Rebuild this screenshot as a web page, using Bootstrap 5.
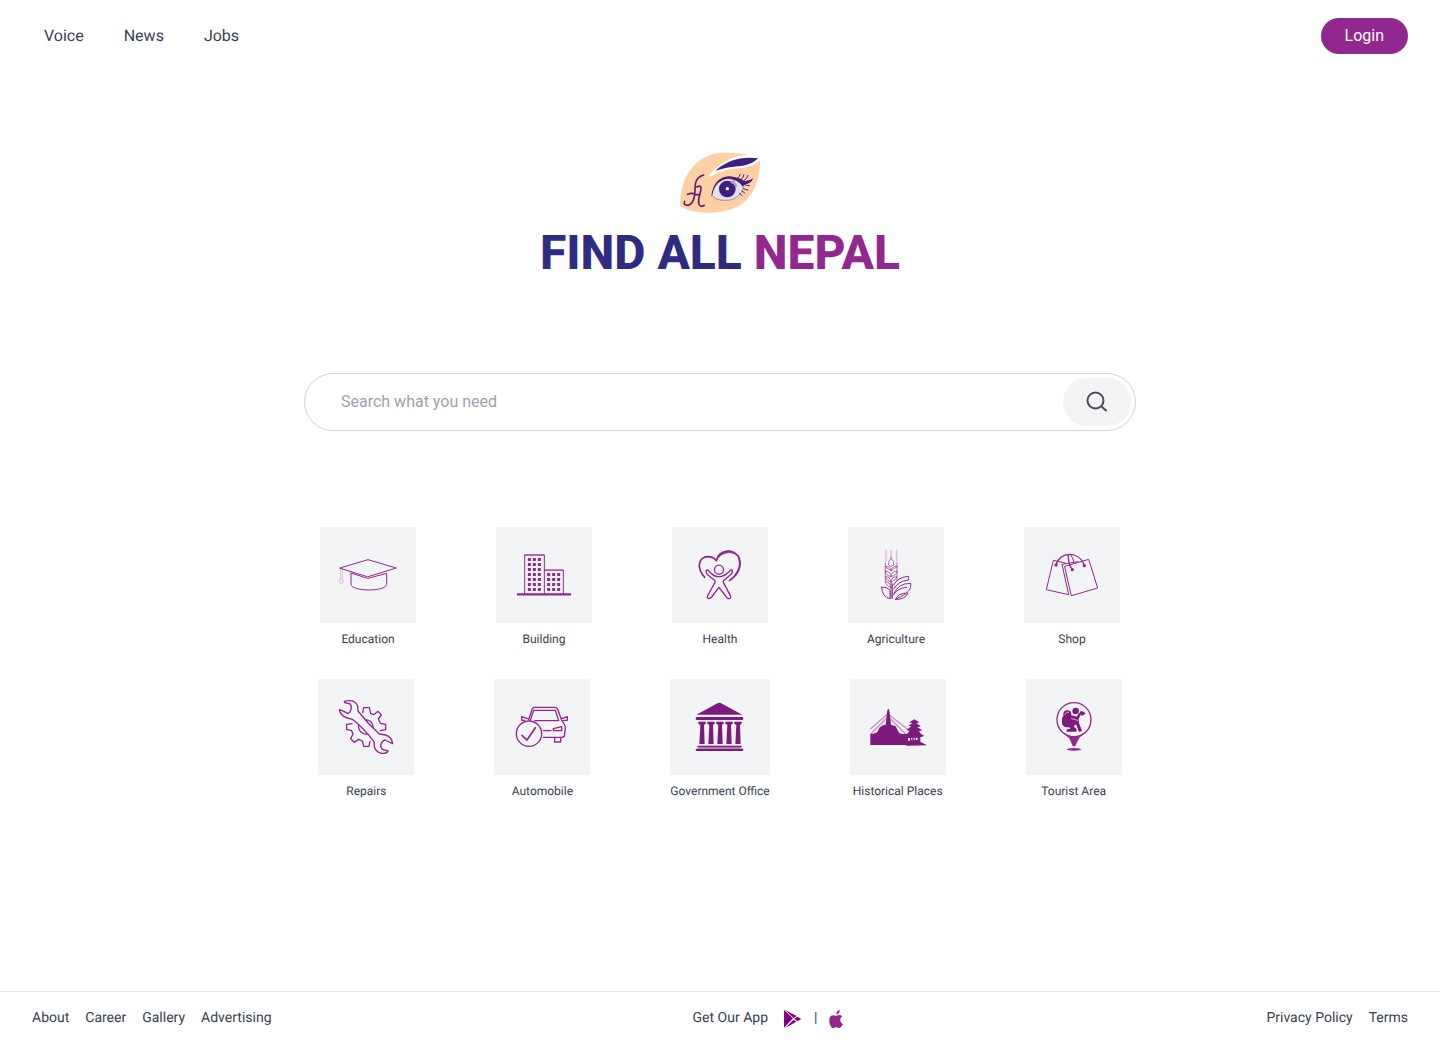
<!DOCTYPE html>
<html lang="en">
<head>
<meta charset="utf-8">
<meta name="viewport" content="width=device-width, initial-scale=1">
<title>Find All Nepal</title>
<link rel="stylesheet" href="https://cdn.jsdelivr.net/npm/bootstrap@5.3.0/dist/css/bootstrap.min.css">
<style>
:root{--brand:#92278f;--brand-dark:#7d1a7d;--navy:#2f2b80;--ink:#374151}
body{font-family:Roboto,"Liberation Sans",sans-serif;color:var(--ink);background:#fff;text-rendering:geometricPrecision}
a{color:inherit;text-decoration:none}
a:hover{color:var(--brand)}
svg{display:block}
.topbar{height:72px;padding:0 32px}
.topbar .navlinks{gap:40px;padding-left:12px}
.btn-login{--bs-btn-color:#fff;--bs-btn-bg:var(--brand);--bs-btn-hover-color:#fff;--bs-btn-hover-bg:#7a1f78;--bs-btn-border-width:0;padding:6px 24px;line-height:24px}
.brand{padding-top:80px}
.brand h1{font-size:48px;line-height:48px;font-weight:800;color:var(--navy);margin-top:16px}
.brand h1 span{color:var(--brand)}
.searchbox{width:100%;max-width:832px;height:58px;margin-top:96px;padding:4px;border:1px solid #d1d5db;border-radius:29px}
.searchbox input{border:0;background:none;padding:0 0 0 32px;color:var(--ink)}
.searchbox input:focus{box-shadow:none}
.searchbox input::placeholder{color:#9ca3af}
.searchbox button{width:68px;background:#f3f4f6;border:0;border-radius:24px}
.cats{margin-top:96px;gap:32px}
.cat-row{gap:32px 80px}
.cat{font-size:12px;line-height:16px;gap:8px}
.tile{min-width:96px;height:96px;background:#f3f4f6}
.tile svg{width:96px;height:96px;fill:none;stroke:var(--brand);stroke-width:3;stroke-linejoin:round;stroke-linecap:round}
.tile .solid{fill:var(--brand-dark);stroke:none}
.foot{border-top:1px solid #e5e7eb;padding:16px 32px;font-size:14px;line-height:21px}
</style>
</head>
<body class="d-flex flex-column min-vh-100">
<header class="topbar d-flex align-items-center justify-content-between">
  <nav class="navlinks d-flex" aria-label="Main"><a href="#">Voice</a><a href="#">News</a><a href="#">Jobs</a></nav>
  <button type="button" class="btn btn-login rounded-pill">Login</button>
</header>

<main class="flex-grow-1 d-flex flex-column align-items-center">
  <div class="brand d-flex flex-column align-items-center">
    <svg width="80" height="61" viewBox="30 21 240 183" aria-hidden="true">
      <path fill="#ffd0a4" d="M30 184C30 88 84 23 162 23Q205 22 236 30Q172 34 113 97Q166 68 216 68Q249 63 270 47C271 110 245 178 177 195C125 209 70 206 30 184Z"/>
      <path fill="#fff" d="M113 97Q166 28 240 30Q262 32 270 46Q250 63 216 69Q166 68 113 97Z"/>
      <path fill="#3b2080" d="M136 77C173 43 220 33 265 40C251 53 229 64 203 64Q169 66 136 77Z"/>
      <path fill="#e2e3e8" d="M127 151C132 119 151 103 178 103Q207 106 224 126C216 151 192 169 164 166Q137 164 127 151Z"/>
      <path fill="none" stroke="#8d5b8e" stroke-width="2" d="M127 151Q138 167 164 166C192 168 213 151 221 128"/>
      <path fill="#4a1b75" d="M124 155C127 116 149 94 180 94Q208 97 223 108Q236 109 250 100Q243 117 225 118L218 125Q205 104 178 101C149 101 132 121 127 151Z"/>
      <g fill="none" stroke="#3b2080" stroke-width="3" stroke-linecap="round"><path d="M200 102Q209 95 211 88M211 106Q221 98 222 89M220 109Q232 101 234 91M221 118Q231 122 238 122M219 129Q226 135 233 135M216 138L224 144M209 145L216 152"/></g>
      <circle cx="172" cy="132" r="25" fill="#3b2080"/>
      <path fill="#aaa1cb" d="M180 113L190 104 202 122 197 129Q194 116 180 113Z"/>
      <circle cx="172" cy="131" r="5" fill="#fff"/>
      <g fill="none" stroke="#631c79" stroke-width="5" stroke-linecap="round"><path d="M101 90C69 100 77 126 74 150Q69 179 54 181Q38 180 44 169M53 148Q66 142 76 149L88 148M80 126C104 114 88 146 86 164Q84 184 96 184L103 181"/></g>
    </svg>
    <h1 class="mb-0 text-center">FIND ALL <span>NEPAL</span></h1>
  </div>

  <form class="searchbox d-flex" role="search">
    <input type="text" class="form-control" placeholder="Search what you need" aria-label="Search what you need">
    <button type="submit" class="d-flex align-items-center justify-content-center flex-shrink-0" aria-label="Search">
      <svg width="24" height="24" viewBox="0 0 24 24" fill="none" stroke="#4b4b52" stroke-width="2" stroke-linecap="round"><circle cx="10.5" cy="10.5" r="8"/><path d="M16.500 16.500L21 20.500"/></svg>
    </button>
  </form>

  <div class="cats d-flex flex-column">
    <div class="cat-row d-flex flex-wrap justify-content-center">
      <a href="#" class="cat d-flex flex-column text-center"><span class="tile d-flex justify-content-center">
        <svg viewBox="0 0 288 288"><path d="M60 123L144 98 229 123 144 149ZM93 139V172C95 194 197 195 200 172V139L144 154Z"/><g stroke-width="2" opacity=".35"><path d="M62 125V156M67 126V156"/><circle cx="64" cy="163" r="6"/></g></svg>
      </span>Education</a>
      <a href="#" class="cat d-flex flex-column text-center"><span class="tile d-flex justify-content-center">
        <svg viewBox="0 0 288 288"><path stroke-linecap="butt" stroke-width="7" d="M63 202H225"/><path d="M86 200V84H145V200M145 129H202V200"/><path stroke-width="4" opacity=".5" d="M86 84H145M147 130H202"/><path stroke-linecap="butt" stroke-width="9" stroke-dasharray="9 6" d="M100 93V192M115 93V192M130 93V192M158 138V192M173 138V192M188 138V192"/></svg>
      </span>Building</a>
      <a href="#" class="cat d-flex flex-column text-center"><span class="tile d-flex justify-content-center">
        <svg viewBox="0 0 288 288"><path stroke-width="5" d="M98 151C69 118 84 90 107 89Q124 89 133 101C138 66 190 63 202 94C210 121 192 148 172 161"/><path d="M134 99C140 67 184 62 199 89C190 76 154 67 134 99ZM199 88C210 109 206 128 190 147C203 126 204 111 199 88Z" fill="#92278f" stroke-width="2"/><circle cx="141" cy="128" r="13.5" stroke-width="4"/><path stroke-width="4" d="M103 130Q108 127 112 134Q141 164 171 134Q176 127 181 130Q183 138 174 145L154 161V166L175 206Q178 213 172 215Q166 216 163 210L141 181 119 210Q114 216 108 214Q104 211 108 204L129 166V161L107 143Q100 136 103 130Z"/></svg>
      </span>Health</a>
      <a href="#" class="cat d-flex flex-column text-center"><span class="tile d-flex justify-content-center">
        <svg viewBox="0 0 288 288"><g stroke-width="2" opacity=".3"><path d="M112 70V103M116 70V103M128 70V91M131 70V91M145 70V103M147 70V103"/></g><path stroke-width="2" d="M129 93Q118 106 122 114Q129 123 137 114Q140 104 129 93Z"/><g stroke-width="2"><path d="M112 108V119L129 131 147 119V108M112 118Q128 116 129 132Q130 117 147 118M112 119V134Q114 145 129 149Q145 145 147 134V119M112 133Q128 132 129 149Q130 132 147 133M112 134V149Q116 162 129 165Q144 160 147 149V134M112 149Q128 148 129 166Q130 148 147 149V160M112 149V164Q115 177 129 182M112 164Q126 163 129 182"/></g><path stroke-width="3" d="M129 168V214M133 170V214"/><path stroke-width="3" d="M101 181Q102 210 126 215V190Q116 179 101 181ZM137 174Q148 151 181 148V159Q150 163 137 186M137 202Q148 169 188 169C190 188 179 195 176 196M137 202Q149 183 176 181M143 217Q148 198 180 198Q170 219 143 217ZM143 217L171 202"/></svg>
      </span>Agriculture</a>
      <a href="#" class="cat d-flex flex-column text-center"><span class="tile d-flex justify-content-center">
        <svg viewBox="0 0 288 288"><path d="M123 118L194 97 221 183 143 206ZM127 109L88 100 67 188 134 203 114 112 162 104"/><path stroke-width="4" d="M96 114C106 74 164 69 181 115M133 83Q132 112 145 128"/><path d="M140 84Q147 91 149 104"/><g fill="#92278f" stroke="none"><circle cx="96" cy="114" r="5"/><circle cx="145" cy="128" r="5"/><circle cx="181" cy="116" r="5"/></g></svg>
      </span>Shop</a>
    </div>
    <div class="cat-row d-flex flex-wrap justify-content-center">
      <a href="#" class="cat d-flex flex-column text-center"><span class="tile d-flex justify-content-center">
        <svg viewBox="0 0 288 288"><path stroke-width="4" d="M79 67Q110 59 119 81L120 96Q150 135 184 165L203 168Q222 175 224 194L201 183Q189 187 188 203L193 211 210 216Q208 224 190 223Q174 219 169 204L168 188Q135 145 103 121L88 117Q67 111 64 92L78 97 90 104Q100 96 100 83L97 75 80 71ZM134 101L137 86H154L158 103 167 107 180 97 190 108 181 120 187 133 203 136V152L187 155M102 134L86 136V151L101 155 105 165 98 179 109 190 122 181 133 186 137 202H153L156 187M121 138Q121 164 146 166M142 122Q165 123 166 148"/></svg>
      </span>Repairs</a>
      <a href="#" class="cat d-flex flex-column text-center"><span class="tile d-flex justify-content-center">
        <svg viewBox="0 0 288 288"><circle cx="105" cy="164" r="38" stroke-width="4"/><path stroke-width="5" stroke-linejoin="miter" d="M84 169L99 183 124 146"/><path d="M104 122L114 91Q116 85 123 85H182Q188 85 191 91L203 124Q214 137 214 148L211 172Q208 175 202 175H148M109 124L119 94H184L194 125H122M101 119L83 113V124H92M203 119L220 113V124H208M148 155H171M178 149L203 143V155H178ZM182 177V189H200V177" stroke-width="4"/></svg>
      </span>Automobile</a>
      <a href="#" class="cat d-flex flex-column text-center"><span class="tile d-flex justify-content-center">
        <svg viewBox="0 0 288 288"><g class="solid"><path d="M73 107L138 72Q142 70 146 72L211 107Z"/><rect x="71" y="114" width="143" height="9" rx="4"/><rect x="76" y="200" width="133" height="5" rx="2"/><rect x="71" y="209" width="143" height="7" rx="3"/><path opacity=".5" d="M78 205H207V209H78Z"/><path d="M79 128H101V134L96 138 98 195H82L85 138 79 134ZM106 128H128V134L123 138 125 195H109L112 138 106 134ZM133 128H155V134L150 138 152 195H136L139 138 133 134ZM160 128H182V134L177 138 179 195H163L166 138 160 134ZM187 128H209V134L204 138 206 195H190L193 138 187 134Z"/></g></svg>
      </span>Government Office</a>
      <a href="#" class="cat d-flex flex-column text-center"><span class="tile d-flex justify-content-center">
        <svg viewBox="0 0 288 288"><path class="solid" d="M61 198V164H70L82 160 88 146 98 139 107 137 110 110 112 94 115 89 118 94 120 111 123 137 137 142 147 161 155 165H171L179 155 169 153 184 142 175 141 187 132 178 130 193 121 208 130 199 133 213 142 202 145 217 154 207 157 213 165 223 171 211 175V188L231 199 172 200 165 198Z"/><g stroke-width="4" opacity=".5"><path d="M112 106L62 149M111 116L64 163M118 108L180 157M119 117L166 164"/></g><path fill="#f3f4f6" stroke="none" d="M174 177H180V185H174ZM183 177H187V182H183ZM191 176H194V184H191ZM197 176H203V183H197Z"/></svg>
      </span>Historical Places</a>
      <a href="#" class="cat d-flex flex-column text-center"><span class="tile d-flex justify-content-center">
        <svg viewBox="0 0 288 288"><circle cx="144" cy="122" r="51" stroke-width="4"/><ellipse cx="144" cy="211" rx="22" ry="4" fill="#92278f" stroke="none"/><path fill="#92278f" stroke="none" d="M119 169Q144 179 169 169L160 176 148 200Q144 203 140 200L130 178Z"/><g class="solid"><circle cx="149" cy="96" r="10"/><circle cx="124" cy="106" r="12"/><rect x="108" y="107" width="35" height="38" rx="14"/><path d="M139 109L151 113 163 98 166 102 158 120 159 132 168 156 159 159 150 136 143 142 153 152 150 158H122V151L134 149 125 139 136 122ZM163 96L173 98 179 104 171 109 165 110Z"/></g><path stroke="#f3f4f6" stroke-width="2" d="M117 107Q119 97 128 100M137 119L155 124"/></svg>
      </span>Tourist Area</a>
    </div>
  </div>
</main>

<footer class="foot d-flex flex-wrap justify-content-between">
  <nav class="d-flex gap-3" aria-label="Company"><a href="#">About</a><a href="#">Career</a><a href="#">Gallery</a><a href="#">Advertising</a></nav>
  <div class="d-flex align-items-center">
    <span class="me-3">Get Our App</span>
    <a href="#" aria-label="Google Play"><svg width="18" height="18" viewBox="0 0 54 54"><path fill="#800080" d="M0 0L27 25 0 53ZM3 0L38 18 29 24ZM31 26L40 20 52 27 40 34ZM3 54L29 29 37 35Z"/></svg></a>
    <span class="mx-2 px-1">|</span>
    <a href="#" aria-label="App Store"><svg width="16" height="20" viewBox="2 0 48 60"><path fill="#92278f" d="M24 17Q24 5 34 3Q35 13 24 17ZM42 22C32 29 35 42 44 45Q37 59 31 57Q23 53 17 57C9 60 2 43 3 33C4 18 15 17 23 21Q34 14 42 22Z"/></svg></a>
  </div>
  <nav class="d-flex gap-3" aria-label="Legal"><a href="#">Privacy Policy</a><a href="#">Terms</a></nav>
</footer>
<script src="https://cdn.jsdelivr.net/npm/bootstrap@5.3.0/dist/js/bootstrap.bundle.min.js"></script>
</body>
</html>
